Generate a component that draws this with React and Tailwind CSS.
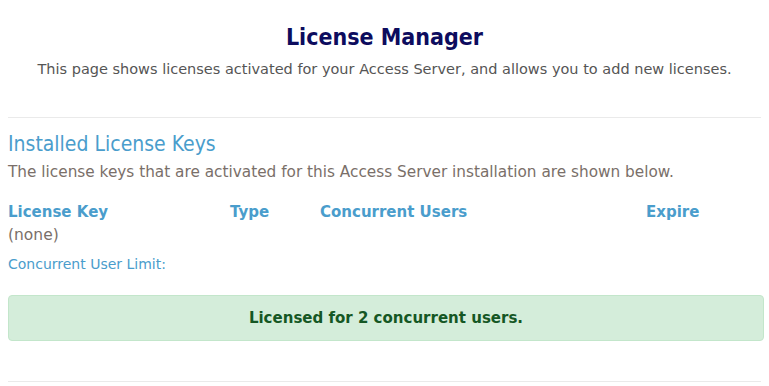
export default function App() {
  const sans = { fontFamily: '"DejaVu Sans", Verdana, sans-serif' };
  const cond = { fontFamily: '"DejaVu Sans Condensed", "DejaVu Sans", sans-serif' };
  return (
    <div className="w-[769px] h-[386px] bg-white overflow-hidden px-2" style={sans}>
      <h1 className="mt-[22px] text-center text-[23px] leading-[30px] font-bold text-[#0d0c5e]" style={cond}>License Manager</h1>
      <p className="mt-[7px] text-center text-[14.5px] leading-[20px] text-[#555]">
        This page shows licenses activated for your Access Server, and allows you to add new licenses.
      </p>
      <div className="mt-[38px] h-px bg-[#eaeaea]" />
      <h2 className="mt-[12px] text-[21px] leading-[28px] text-[#4a9dcc]" style={cond}>Installed License Keys</h2>
      <p className="mt-[4px] text-[15.3px] leading-[20px] text-[#7a6f69]">
        The license keys that are activated for this Access Server installation are shown below.
      </p>
      <div className="mt-[20px] grid grid-cols-[222px_90px_326px_1fr] text-[15px] leading-[20px] font-bold text-[#4a9dcc]">
        <div>License Key</div>
        <div>Type</div>
        <div>Concurrent Users</div>
        <div>Expire</div>
      </div>
      <div className="mt-[3px] text-[15.5px] leading-[20px] text-[#7a6f69]">(none)</div>
      <div className="mt-[10px] text-[14px] leading-[18px] text-[#4a9dcc]">Concurrent User Limit:</div>
      <div className="mt-[22px] -mr-[3px] h-[46px] rounded-[4px] border border-[#c3e6cb] bg-[#d4edda] flex items-center justify-center">
        <span className="text-[16.7px] font-bold text-[#155724]" style={cond}>Licensed for 2 concurrent users.</span>
      </div>
      <div className="mt-[40px] h-px bg-[#eaeaea]" />
    </div>
  );
}
